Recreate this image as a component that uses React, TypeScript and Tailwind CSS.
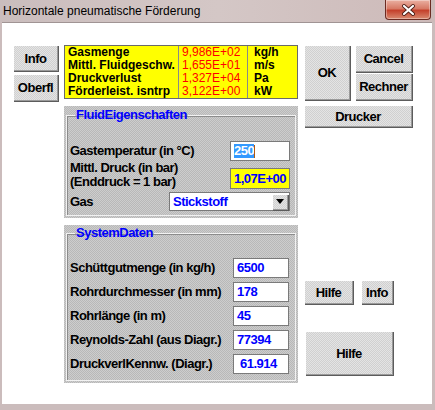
import React from 'react';

const font = "font-['Liberation_Sans',Arial,sans-serif]";
const btnBg =
  "bg-[image:repeating-conic-gradient(#d0d0d0_0%_25%,#e4e4e4_0%_50%)] bg-size-[2px_2px] bg-[length:2px_2px]";
const panelBg =
  "bg-[image:repeating-conic-gradient(#b8b8b8_0%_25%,#cdcdcd_0%_50%)] bg-size-[2px_2px] bg-[length:2px_2px]";
const bevel = "shadow-[inset_1px_1px_0_#ffffff,inset_-1px_-1px_0_#9a9a9a,1px_1px_0_#5c5c5c]";
// bold dialog text, taller glyphs squeezed back to the original widths
const txt = "text-[13px] tracking-[-0.5px] font-bold";

const Btn = ({ children, className }: { children: React.ReactNode; className: string }) => (
    <button
        className={`${btnBg} ${bevel} ${txt} flex items-center justify-center leading-[15px] text-black ${className}`}
    >
        {children}
    </button>
);

const Field = ({ value, className }: { value: string; className: string }) => (
    <div className={`h-[20px] flex items-center bg-white border border-[#7a7a7a] ${txt} text-[#0000ff] ${className}`}>
        {value}
    </div>
);

const results = [
    ['Gasmenge', '9,986E+02', 'kg/h'],
    ['Mittl. Fluidgeschw.', '1,655E+01', 'm/s'],
    ['Druckverlust', '1,327E+04', 'Pa'],
    ['Förderleist. isntrp', '3,122E+00', 'kW'],
];

const systemRows = [
    ['Schüttgutmenge (in kg/h)', '6500', 'pl-[3px]'],
    ['Rohrdurchmesser (in mm)', '178', 'pl-[3px]'],
    ['Rohrlänge (in m)', '45', 'pl-[3px]'],
    ['Reynolds-Zahl (aus Diagr.)', '77394', 'pl-[3px]'],
    ['DruckverlKennw. (Diagr.)', '61.914', 'pl-[6px]'],
];

export default function App() {
    return (
        <div className={`w-[435px] h-[410px] flex flex-col overflow-hidden bg-[#cbbcbc] ${font}`}>
            {/* title bar */}
            <div className="h-[22px] shrink-0 flex items-start bg-[linear-gradient(90deg,#cabdbd,#d4c7c6_50%,#cdbab9)]">
                <span className="pl-[3px] pt-[4px] text-[12px] leading-[14px] text-black">
                    Horizontale pneumatische Förderung
                </span>
                <div className="ml-auto mr-[4px] w-[46px] h-[20px] rounded-b-[4px] border border-t-0 border-[#6b2b22] bg-[linear-gradient(180deg,#eab0a2,#d77a66_45%,#c4412c_55%,#d98a70)] flex items-center justify-center shadow-[inset_0_0_0_1px_rgba(255,255,255,0.35)]">
                    <svg width="13" height="12" viewBox="0 0 13 12">
                        <path d="M2 2 L11 10 M11 2 L2 10" stroke="#4a1d15" strokeWidth="3.8" strokeLinecap="round" />
                        <path d="M2 2 L11 10 M11 2 L2 10" stroke="#ffffff" strokeWidth="2.2" strokeLinecap="round" />
                    </svg>
                </div>
            </div>

            {/* client area */}
            <div className="flex-1 ml-[2px] mr-[3px] mb-[6px] bg-white border-t border-[#a09494] pl-[11px] pt-[22px] flex items-start">
                {/* left buttons */}
                <div className="w-[45px] flex flex-col gap-[3px]">
                    <Btn className="h-[26px]">Info</Btn>
                    <Btn className="h-[27px]">Oberfl</Btn>
                </div>

                {/* middle column */}
                <div className="ml-[6px] w-[234px] flex flex-col">
                    <div className="h-[54px] flex bg-[#ffff00] border border-[#6a6a6a] text-[12px] leading-[13px]">
                        <div className="w-[113px] pl-[3px] font-bold text-black">
                            {results.map((r) => (
                                <div key={r[0]}>{r[0]}</div>
                            ))}
                        </div>
                        <div className="w-[69px] border-l border-[#8a8a8a] pl-[3px] text-[#ff0000]">
                            {results.map((r) => (
                                <div key={r[1]}>{r[1]}</div>
                            ))}
                        </div>
                        <div className="flex-1 border-l border-[#8a8a8a] pl-[6px] font-bold text-black">
                            {results.map((r) => (
                                <div key={r[2]}>{r[2]}</div>
                            ))}
                        </div>
                    </div>

                    {/* FluidEigenschaften */}
                    <div className={`mt-[7px] h-[112px] p-[2px] ${panelBg}`}>
                        <fieldset className="h-full border border-[#f2f2f2] shadow-[inset_1px_1px_0_#8c8c8c] pl-[3px] pr-[5px]">
                            <legend className={`ml-[5px] px-[1px] leading-[14px] ${txt} text-[#0000ff]`}>
                                FluidEigenschaften
                            </legend>
                            <div className={`mt-[19px] h-[20px] flex items-center justify-between ${txt} text-black`}>
                                <span>Gastemperatur (in °C)</span>
                                <div className="w-[60px] h-[20px] flex items-center pl-[3px] bg-white border border-[#7a7a7a]">
                                    <span className="bg-[#3399ff] text-white leading-[14px]">250</span>
                                    <span className="w-[1px] h-[13px] bg-[#b05a10]" />
                                </div>
                            </div>
                            <div className={`h-[28px] flex items-end justify-between ${txt} text-black`}>
                                <div className="leading-[14px]">
                                    <div>Mittl. Druck (in bar)</div>
                                    <div>(Enddruck = 1 bar)</div>
                                </div>
                                <div className="w-[60px] h-[21px] flex items-center pl-[3px] bg-[#ffff00] border border-[#7a7a7a] text-[#0000ff]">
                                    1,07E+00
                                </div>
                            </div>
                            <div className={`mt-[3px] h-[19px] flex items-center justify-between ${txt} text-black`}>
                                <span>Gas</span>
                                <div className="w-[121px] h-[19px] flex items-center bg-white border border-[#7a7a7a] text-[#0000ff]">
                                    <span className="pl-[3px] flex-1">Stickstoff</span>
                                    <div className={`w-[16px] h-[16px] mr-[1px] flex items-center justify-center ${btnBg} ${bevel}`}>
                                        <svg width="8" height="5" viewBox="0 0 8 5">
                                            <path d="M0 0 H8 L4 5 Z" fill="#000" />
                                        </svg>
                                    </div>
                                </div>
                            </div>
                        </fieldset>
                    </div>

                    {/* SystemDaten */}
                    <div className={`mt-[7px] h-[158px] p-[2px] pt-[1px] ${panelBg}`}>
                        <fieldset className="h-full border border-[#f2f2f2] shadow-[inset_1px_1px_0_#8c8c8c] pl-[3px] pr-[5px]">
                            <legend className={`ml-[5px] px-[1px] leading-[14px] ${txt} text-[#0000ff]`}>
                                SystemDaten
                            </legend>
                            <div className="mt-[18px] flex flex-col gap-[4px]">
                                {systemRows.map((r) => (
                                    <div key={r[0]} className={`h-[20px] flex items-center justify-between ${txt} text-black`}>
                                        <span>{r[0]}</span>
                                        <Field value={r[1]} className={`w-[56px] mr-[1px] ${r[2]}`} />
                                    </div>
                                ))}
                            </div>
                        </fieldset>
                    </div>
                </div>

                {/* right column */}
                <div className="ml-[6px] w-[108px] flex flex-col">
                    <div className="flex gap-[5px]">
                        <Btn className="w-[46px] h-[55px]">OK</Btn>
                        <div className="w-[57px] flex flex-col gap-[1px]">
                            <Btn className="h-[27px]">Cancel</Btn>
                            <Btn className="h-[27px]">Rechner</Btn>
                        </div>
                    </div>
                    <Btn className="mt-[5px] h-[22px] w-full">Drucker</Btn>
                    <div className="mt-[153px] flex gap-[8px]">
                        <Btn className="w-[49px] h-[24px]">Hilfe</Btn>
                        <Btn className="w-[32px] h-[24px]">Info</Btn>
                    </div>
                    <Btn className="mt-[27px] ml-[1px] w-[88px] h-[44px]">Hilfe</Btn>
                </div>
            </div>
        </div>
    );
}
